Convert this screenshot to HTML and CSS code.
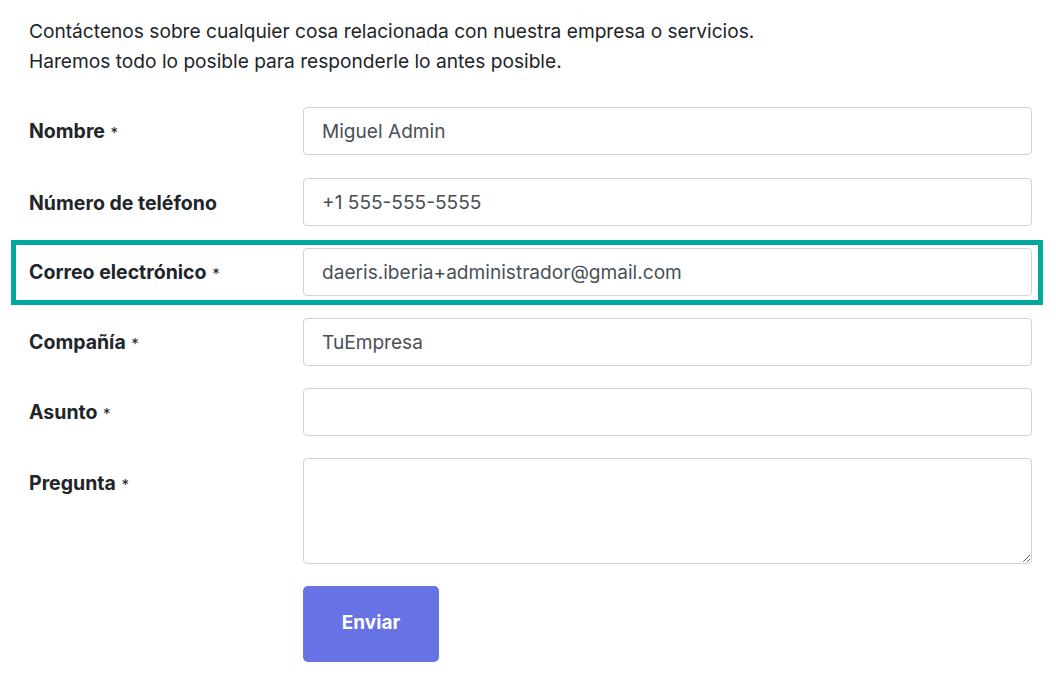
FILE: index.html
```html
<!DOCTYPE html>
<html lang="es">
<head>
<meta charset="utf-8">
<title>Contacto</title>
<link rel="stylesheet" href="styles.css">
</head>
<body>
<main class="page">
  <p class="intro">Contáctenos sobre cualquier cosa relacionada con nuestra empresa o servicios.<br>Haremos todo lo posible para responderle lo antes posible.</p>
  <form class="form">
    <div class="row row-first">
      <label class="label">Nombre <span class="req">*</span></label>
      <input class="field" type="text" value="Miguel Admin">
    </div>
    <div class="row">
      <label class="label">Número de teléfono</label>
      <input class="field" type="text" value="+1 555-555-5555">
    </div>
    <div class="row highlight">
      <label class="label">Correo electrónico <span class="req">*</span></label>
      <input class="field" type="text" value="daeris.iberia+administrador@gmail.com">
    </div>
    <div class="row">
      <label class="label">Compañía <span class="req">*</span></label>
      <input class="field" type="text" value="TuEmpresa">
    </div>
    <div class="row">
      <label class="label">Asunto <span class="req">*</span></label>
      <input class="field" type="text" value="">
    </div>
    <div class="row row-top">
      <label class="label">Pregunta <span class="req">*</span></label>
      <textarea class="field area"></textarea>
    </div>
    <div class="row">
      <span class="label"></span>
      <button class="btn" type="button">Enviar</button>
    </div>
  </form>
</main>
</body>
</html>
```
FILE: styles.css
```css
* { box-sizing: border-box; }
html, body { margin: 0; background: #fff; }
body {
  font-family: Inter, "Noto Sans", "Liberation Sans", sans-serif;
  color: #212529;
}
.page {
  padding: 16px 24px 0 29px;
}
.intro {
  margin: 0;
  font-size: 19.15px;
  line-height: 30px;
  color: #212529;
}
.form {
  margin-top: 31px;
  display: flex;
  flex-direction: column;
  gap: 22px;
}
.row {
  position: relative;
  display: grid;
  grid-template-columns: 274px 1fr;
  align-items: center;
  min-height: 48px;
}
.row-first { margin-bottom: 1px; }
.row-top { align-items: start; }
.label {
  padding-top: 2px;
  font-size: 19.5px;
  font-weight: 700;
  line-height: 24px;
  color: #212529;
}
.row-top .label { padding-top: 13px; }
.req {
  font-weight: 400;
  font-size: 15px;
  color: #212529;
  margin-left: 1px;
}
.field {
  display: block;
  width: 100%;
  height: 48px;
  margin: 0;
  padding: 0 18px;
  border: 1px solid #ced4da;
  border-radius: 4px;
  background: #fff;
  font-family: Inter, "Noto Sans", "Liberation Sans", sans-serif;
  font-size: 19.1px;
  color: #495057;
  outline: none;
}
.area {
  height: 106px;
  resize: vertical;
  padding: 12px 18px;
}
.btn {
  width: 136px;
  height: 76px;
  padding: 0 0 3px;
  border: 0;
  border-radius: 5px;
  background: #6772e5;
  color: #fff;
  font-family: Inter, "Noto Sans", "Liberation Sans", sans-serif;
  font-size: 19px;
  font-weight: 700;
  cursor: pointer;
}
.highlight::after {
  content: "";
  position: absolute;
  left: -18px;
  right: -11px;
  top: -8px;
  bottom: -9px;
  border: 5px solid #00a8a0;
  pointer-events: none;
}
```
